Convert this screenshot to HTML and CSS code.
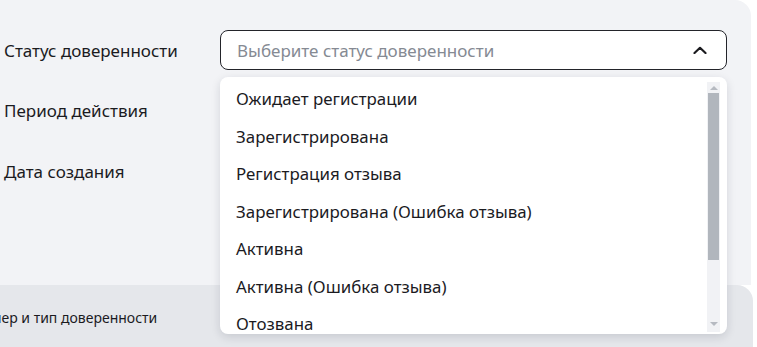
FILE: index.html
```html
<!DOCTYPE html>
<html lang="ru">
  <head>
    <meta charset="utf-8">
    <link rel="stylesheet" href="styles.css">
  </head>
  <body>
    <section class="filters">
      <div class="filter-row">
        <label class="filter-label">Статус доверенности</label>
        <div class="select">
          <div class="select__control">
            <span class="select__placeholder">Выберите статус доверенности</span>
            <svg class="select__chevron" width="14" height="8" viewBox="0 0 14 8">
              <path d="M1.5 7 L7 1.8 L12.5 7" fill="none" stroke="#1b1b1f" stroke-width="2.2" stroke-linecap="round" stroke-linejoin="round"/>
            </svg>
          </div>
          <div class="select__menu">
            <ul class="select__options">
              <li>Ожидает регистрации</li>
              <li>Зарегистрирована</li>
              <li>Регистрация отзыва</li>
              <li>Зарегистрирована (Ошибка отзыва)</li>
              <li>Активна</li>
              <li>Активна (Ошибка отзыва)</li>
              <li>Отозвана</li>
            </ul>
            <div class="scrollbar">
              <span class="scrollbar__arrow scrollbar__arrow--up"></span>
              <span class="scrollbar__thumb"></span>
              <span class="scrollbar__rest"></span>
              <span class="scrollbar__arrow scrollbar__arrow--down"></span>
            </div>
          </div>
        </div>
      </div>
      <div class="filter-row">
        <label class="filter-label">Период действия</label>
      </div>
      <div class="filter-row">
        <label class="filter-label">Дата создания</label>
      </div>
    </section>

    <section class="table-head">
      <span class="table-head__cell">Номер и тип доверенности</span>
    </section>
  </body>
</html>
```

FILE: styles.css
```css
body {
  margin: 0;
  background: #ffffff;
  font-family: "Noto Sans", "Open Sans", sans-serif;
  color: #1b1b1f;
  overflow: hidden;
}

.filters {
  box-sizing: border-box;
  width: 751px;
  height: 285px;
  padding: 20px 0 0 4px;
  background: #f2f3f6;
  border-top-right-radius: 16px;
}

.filter-row {
  display: flex;
  align-items: center;
  height: 60.5px;
}

.filter-label {
  width: 216px;
  font-size: 17px;
}

.select {
  position: relative;
  width: 507px;
}

.select__control {
  box-sizing: border-box;
  display: flex;
  align-items: center;
  justify-content: space-between;
  height: 40px;
  padding: 0 19px 0 16px;
  background: #fff;
  border: 1px solid #23242a;
  border-radius: 8px;
}

.select__placeholder {
  font-size: 17px;
  color: #858a93;
}

.select__chevron { display: block; }

.select__menu {
  position: absolute;
  top: 47px;
  left: 0;
  width: 507px;
  height: 257px;
  display: flex;
  background: #fff;
  border-radius: 8px;
  box-shadow: 0 3px 10px rgba(20, 30, 50, 0.14);
  overflow: hidden;
  z-index: 2;
}

.select__options {
  flex: 1;
  list-style: none;
  margin: 0;
  padding: 3px 0 0 16px;
}

.select__options li {
  height: 37.5px;
  line-height: 37.5px;
  font-size: 16.9px;
  white-space: nowrap;
}

.scrollbar {
  width: 13px;
  margin: 5px 7px 2px 0;
  display: flex;
  flex-direction: column;
  align-items: center;
  background: #f1f2f5;
}

.scrollbar__arrow {
  flex: 0 0 11px;
  display: flex;
  align-items: center;
  justify-content: center;
}

.scrollbar__arrow::after {
  content: "";
  border-left: 4px solid transparent;
  border-right: 4px solid transparent;
}

.scrollbar__arrow--up::after { border-bottom: 4px solid #b6bac1; }
.scrollbar__arrow--down { flex-basis: 16px; }
.scrollbar__arrow--down::after { border-top: 4px solid #b6bac1; }

.scrollbar__thumb {
  flex: 0 0 167px;
  width: 11px;
  background: #b1b6bd;
}

.scrollbar__rest { flex: 1; }

.table-head {
  box-sizing: border-box;
  width: 753px;
  height: 62px;
  padding-top: 21px;
  background: #e5e7eb;
  border-top-right-radius: 16px;
}

.table-head__cell {
  display: inline-block;
  margin-left: -28px;
  font-size: 14px;
}
```
